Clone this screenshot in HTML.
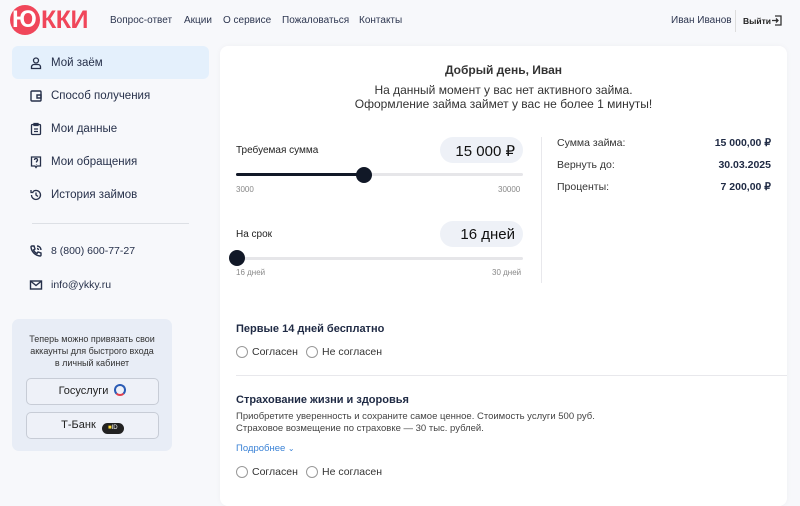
<!DOCTYPE html>
<html><head><meta charset="utf-8"><style>
*{margin:0;padding:0;box-sizing:border-box}
body{width:800px;height:495px;overflow:hidden;background:#f7f8fb;font-family:"Liberation Sans",sans-serif;color:#222b45;position:relative}
.a{position:absolute;white-space:nowrap}
.nav{font-size:10px;color:#2d3650;top:15px}
.menu{font-size:11.5px;color:#26304a}
.ic{position:absolute;left:29px;width:14px;height:14px}
.card{position:absolute;left:220px;top:46px;width:567px;height:460px;background:#fff;border-radius:8px;box-shadow:0 0 6px rgba(0,0,0,.04)}
.lbl{font-size:10px;color:#222}
.small{font-size:8px;color:#888}
.pill{position:absolute;background:#eef1f7;border-radius:13px;height:26px;font-size:15px;color:#111;text-align:right;padding:5px 8px 0 0}
.track{position:absolute;height:3px;background:#e6e6e9;border-radius:2px}
.knob{position:absolute;width:16px;height:16px;border-radius:50%;background:#111827}
.rad{position:absolute;width:12px;height:12px;border:1px solid #999;border-radius:50%}
.rl{font-size:10.5px;color:#333}
.h{font-size:11px;font-weight:bold;color:#1f2a44}
.btn{position:absolute;left:26px;width:133px;height:27px;border:1px solid #c7ccd6;border-radius:5px;background:#eef1f8;font-size:11px;color:#222;text-align:center;line-height:25px}
</style></head><body>
<div class="a" style="left:10px;top:5px;width:30px;height:30px;border-radius:50%;background:#f0465a"></div>
<div class="a" style="left:12px;top:5px;font-size:24px;font-weight:bold;color:#fff;line-height:30px">Ю</div>
<div class="a" style="left:41px;top:5px;font-size:25px;font-weight:bold;color:#f0465a;line-height:30px;letter-spacing:-0.5px">ККИ</div>
<div class="a nav" style="left:110px">Вопрос-ответ</div>
<div class="a nav" style="left:184px">Акции</div>
<div class="a nav" style="left:223px">О сервисе</div>
<div class="a nav" style="left:282px">Пожаловаться</div>
<div class="a nav" style="left:359px">Контакты</div>
<div class="a nav" style="left:671px">Иван Иванов</div>
<div class="a" style="left:735px;top:10px;width:1px;height:22px;background:#ddd"></div>
<div class="a" style="left:743px;top:16px;font-size:8.5px;font-weight:bold;color:#222">Выйти</div>
<svg class="a" style="left:771px;top:15px" width="11" height="11" viewBox="0 0 11 11" fill="none" stroke="#333" stroke-width="1.3"><path d="M4 1h6v9H4M1 5.5h6M5 3.5l2 2-2 2"/></svg>

<div class="a" style="left:12px;top:46px;width:197px;height:33px;background:#e4f0fc;border-radius:6px"></div>
<svg class="ic" style="top:56px" viewBox="0 0 14 14" fill="none" stroke="#26304a" stroke-width="1.3"><circle cx="7" cy="4.5" r="2.5"/><path d="M2.5 12.5v-1.5a2.5 2.5 0 0 1 2.5-2.5h4a2.5 2.5 0 0 1 2.5 2.5v1.5z"/></svg>
<div class="a menu" style="left:51px;top:57px">Мой заём</div>
<svg class="ic" style="top:89px" viewBox="0 0 14 14" fill="none" stroke="#26304a" stroke-width="1.4"><rect x="2" y="2" width="10" height="10" rx="1"/><path d="M8 6h4v3H8z"/></svg>
<div class="a menu" style="left:51px;top:90px">Способ получения</div>
<svg class="ic" style="top:122px" viewBox="0 0 14 14" fill="none" stroke="#26304a" stroke-width="1.3"><rect x="2.5" y="2.5" width="9" height="10" rx="1"/><path d="M5 1.5h4v2H5zM5 7h4M5 9.5h4"/></svg>
<div class="a menu" style="left:51px;top:123px">Мои данные</div>
<svg class="ic" style="top:155px" viewBox="0 0 14 14" fill="none" stroke="#26304a" stroke-width="1.3"><path d="M2.5 2h9v9H8l-1 1.5L6 11H2.5z"/><path d="M5.5 5a1.5 1.5 0 1 1 2 1.4V7.5M7.5 9v.5"/></svg>
<div class="a menu" style="left:51px;top:156px">Мои обращения</div>
<svg class="ic" style="top:188px" viewBox="0 0 14 14" fill="none" stroke="#26304a" stroke-width="1.3"><path d="M2.5 7a4.5 4.5 0 1 0 1.3-3.2M2 2v2.5h2.5M7 4.5V7l2 1.5"/></svg>
<div class="a menu" style="left:51px;top:189px">История займов</div>
<div class="a" style="left:32px;top:223px;width:157px;height:1px;background:#dde0e5"></div>
<svg class="ic" style="top:244px" viewBox="0 0 14 14" fill="none" stroke="#26304a" stroke-width="1.4"><path d="M3 2l2 0 1 3-1.5 1a7 7 0 0 0 3.5 3.5L9 8l3 1v2a1 1 0 0 1-1 1A10 10 0 0 1 2 3a1 1 0 0 1 1-1zM8 2a4 4 0 0 1 4 4M8 4.5a1.5 1.5 0 0 1 1.5 1.5"/></svg>
<div class="a" style="left:51px;top:245px;font-size:10.5px;color:#26304a">8 (800) 600-77-27</div>
<svg class="ic" style="top:278px" viewBox="0 0 14 14" fill="none" stroke="#26304a" stroke-width="1.4"><rect x="1.5" y="3" width="11" height="8"/><path d="M1.5 3l5.5 4.5L12.5 3"/></svg>
<div class="a" style="left:51px;top:279px;font-size:10.5px;color:#26304a">info@ykky.ru</div>

<div class="a" style="left:12px;top:319px;width:160px;height:132px;background:#e8edf6;border-radius:7px"></div>
<div class="a" style="left:12px;top:333px;width:160px;text-align:center;font-size:9px;line-height:12px;color:#333;white-space:normal">Теперь можно привязать свои<br>аккаунты для быстрого входа<br>в личный кабинет</div>
<div class="btn" style="top:378px">Госуслуги <span style="display:inline-block;width:12px;height:12px;border-radius:50%;border:2px solid #2a5bb5;border-bottom-color:#e04050;vertical-align:-2px;margin-left:3px"></span></div>
<div class="btn" style="top:412px">Т-Банк <span style="display:inline-block;width:22px;height:11px;border-radius:6px;background:#222;vertical-align:-1px;margin-left:3px;font-size:6px;color:#fff;line-height:11px"><span style="color:#fd3">■</span>ID</span></div>

<div class="card"></div>
<div class="a" style="left:220px;width:567px;top:63px;text-align:center;font-size:12px;font-weight:bold;color:#333">Добрый день, Иван</div>
<div class="a" style="left:220px;width:567px;top:83px;text-align:center;font-size:12px;line-height:14px;color:#333">На данный момент у вас нет активного займа.<br>Оформление займа займет у вас не более 1 минуты!</div>

<div class="a lbl" style="left:236px;top:145px">Требуемая сумма</div>
<div class="pill" style="left:440px;top:137px;width:83px">15 000 ₽</div>
<div class="track" style="left:236px;top:173px;width:287px"></div>
<div class="track" style="left:236px;top:173px;width:128px;background:#111827"></div>
<div class="knob" style="left:356px;top:167px"></div>
<div class="a small" style="left:236px;top:185px">3000</div>
<div class="a small" style="left:498px;top:185px">30000</div>

<div class="a lbl" style="left:236px;top:229px">На срок</div>
<div class="pill" style="left:440px;top:221px;width:83px">16 дней</div>
<div class="track" style="left:236px;top:257px;width:287px"></div>
<div class="knob" style="left:229px;top:250px"></div>
<div class="a small" style="left:236px;top:268px">16 дней</div>
<div class="a small" style="left:492px;top:268px">30 дней</div>

<div class="a" style="left:541px;top:137px;width:1px;height:146px;background:#e8e8ec"></div>
<div class="a" style="left:557px;top:137px;font-size:10.5px;color:#333">Сумма займа:</div>
<div class="a" style="left:557px;top:159px;font-size:10.5px;color:#333">Вернуть до:</div>
<div class="a" style="left:557px;top:181px;font-size:10.5px;color:#333">Проценты:</div>
<div class="a" style="right:29px;top:137px;font-size:10.5px;font-weight:bold;color:#1f2a44">15 000,00 ₽</div>
<div class="a" style="right:29px;top:159px;font-size:10.5px;font-weight:bold;color:#1f2a44">30.03.2025</div>
<div class="a" style="right:29px;top:181px;font-size:10.5px;font-weight:bold;color:#1f2a44">7 200,00 ₽</div>

<div class="a h" style="left:236px;top:323px">Первые 14 дней бесплатно</div>
<div class="rad" style="left:236px;top:346px"></div><div class="a rl" style="left:252px;top:346px">Согласен</div>
<div class="rad" style="left:306px;top:346px"></div><div class="a rl" style="left:322px;top:346px">Не согласен</div>
<div class="a" style="left:236px;top:375px;width:551px;height:1px;background:#e8e8ec"></div>
<div class="a h" style="left:236px;top:394px">Страхование жизни и здоровья</div>
<div class="a" style="left:236px;top:411px;font-size:9.5px;line-height:12px;color:#444">Приобретите уверенность и сохраните самое ценное. Стоимость услуги 500 руб.<br>Страховое возмещение по страховке — 30 тыс. рублей.</div>
<div class="a" style="left:236px;top:443px;font-size:9.5px;color:#3a82d6">Подробнее <span style="font-size:8px">⌄</span></div>
<div class="rad" style="left:236px;top:466px"></div><div class="a rl" style="left:252px;top:466px">Согласен</div>
<div class="rad" style="left:306px;top:466px"></div><div class="a rl" style="left:322px;top:466px">Не согласен</div>
</body></html>
